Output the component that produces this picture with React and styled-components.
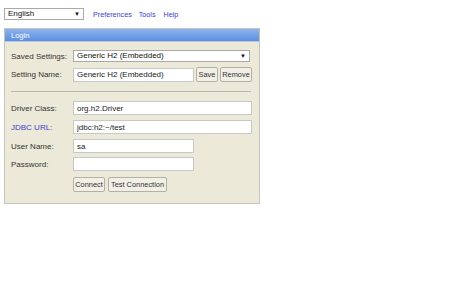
import React from "react";
import styled, { createGlobalStyle } from "styled-components";

const Global = createGlobalStyle`
  html, body { margin: 0; padding: 0; background: #fff; }
  body { font-family: "Liberation Sans", Arial, sans-serif; font-size: 8px; color: #222; }
`;

const Page = styled.div`
  padding: 8px 4px;
`;

const Toolbar = styled.div`
  display: flex;
  align-items: center;
  height: 12px;
`;

const SelectWrap = styled.div`
  position: relative;
  width: ${(p) => p.$w}px;
  height: ${(p) => p.$h}px;
  flex: none;
`;

const Select = styled.select`
  appearance: none;
  -webkit-appearance: none;
  box-sizing: border-box;
  width: 100%;
  height: 100%;
  margin: 0;
  padding: 0 0 0 3px;
  border: 1px solid #a9a9a9;
  background: #fff;
  font-family: "Liberation Sans", Arial, sans-serif;
  font-size: 8px;
  color: #111;
  line-height: 10px;
`;

const Arrow = styled.span`
  position: absolute;
  right: 4px;
  top: 50%;
  transform: translateY(-50%);
  font-size: 6px;
  color: #111;
  pointer-events: none;
`;

const Link = styled.a`
  color: #3b3bd1;
  text-decoration: none;
  font-size: 7.2px;
  margin-left: ${(p) => p.$ml}px;
`;

const Panel = styled.div`
  box-sizing: border-box;
  width: 256px;
  margin-top: 8px;
  border: 1px solid #c4c4c0;
  background: #ece9d9;
`;

const Header = styled.div`
  height: 12px;
  display: flex;
  align-items: center;
  padding-left: 6px;
  color: #fff;
  font-size: 7.5px;
  background: linear-gradient(#8cb2ee, #5d8fe0);
  border-bottom: 1px solid #b9c8de;
`;

const Body = styled.div`
  padding: 8px 7px 11px 6px;
  display: flex;
  flex-direction: column;
`;

const Row = styled.div`
  display: flex;
  align-items: center;
  height: ${(p) => p.$h}px;
  margin-top: ${(p) => p.$mt || 0}px;
`;

const Label = styled.div`
  width: 62px;
  flex: none;
  font-size: 8px;
  color: ${(p) => (p.$blue ? "#3d3dcc" : "#333")};
`;

const Input = styled.input`
  box-sizing: border-box;
  width: ${(p) => p.$w}px;
  height: 14px;
  margin: 0;
  padding: 0 3px;
  border: 1px solid #c8c8c8;
  background: #fff;
  font-family: "Liberation Sans", Arial, sans-serif;
  font-size: 8px;
  color: #222;
  outline: none;
`;

const Button = styled.button`
  box-sizing: border-box;
  height: 15px;
  margin: 0 0 0 ${(p) => p.$ml || 0}px;
  padding: 0;
  border: 1px solid #b3b1a6;
  border-radius: 2px;
  background: #f1efe6;
  font-family: "Liberation Sans", Arial, sans-serif;
  font-size: 7.4px;
  color: #333;
  white-space: nowrap;
  text-align: center;
  width: ${(p) => p.$w}px;
  flex: none;
`;

const Rule = styled.hr`
  margin: 9px 0 9px 0;
  width: 240px;
  border: none;
  border-top: 1px solid #b9b7ad;
  height: 0;
`;

const Spacer = styled.div`
  width: 62px;
  flex: none;
`;

export default function App() {
  return (
    <>
      <Global />
      <Page>
        <Toolbar>
          <SelectWrap $w={80} $h={12}>
            <Select defaultValue="en">
              <option value="en">English</option>
            </Select>
            <Arrow>▼</Arrow>
          </SelectWrap>
          <Link href="#" $ml={9}>Preferences</Link>
          <Link href="#" $ml={7}>Tools</Link>
          <Link href="#" $ml={8}>Help</Link>
        </Toolbar>
        <Panel>
          <Header>Login</Header>
          <Body>
            <Row $h={12}>
              <Label>Saved Settings:</Label>
              <SelectWrap $w={177} $h={12}>
                <Select defaultValue="h2">
                  <option value="h2">Generic H2 (Embedded)</option>
                </Select>
                <Arrow>▼</Arrow>
              </SelectWrap>
            </Row>
            <Row $h={15} $mt={5}>
              <Label>Setting Name:</Label>
              <Input $w={121} defaultValue="Generic H2 (Embedded)" />
              <Button $ml={2} $w={22}>Save</Button>
              <Button $ml={2} $w={32}>Remove</Button>
            </Row>
            <Rule />
            <Row $h={14}>
              <Label>Driver Class:</Label>
              <Input $w={179} defaultValue="org.h2.Driver" />
            </Row>
            <Row $h={14} $mt={5}>
              <Label $blue>JDBC URL:</Label>
              <Input $w={179} defaultValue="jdbc:h2:~/test" />
            </Row>
            <Row $h={14} $mt={5}>
              <Label>User Name:</Label>
              <Input $w={121} defaultValue="sa" />
            </Row>
            <Row $h={14} $mt={4}>
              <Label>Password:</Label>
              <Input $w={121} type="password" defaultValue="" />
            </Row>
            <Row $h={15} $mt={6}>
              <Spacer />
              <Button $w={32}>Connect</Button>
              <Button $ml={3} $w={59}>Test Connection</Button>
            </Row>
          </Body>
        </Panel>
      </Page>
    </>
  );
}
